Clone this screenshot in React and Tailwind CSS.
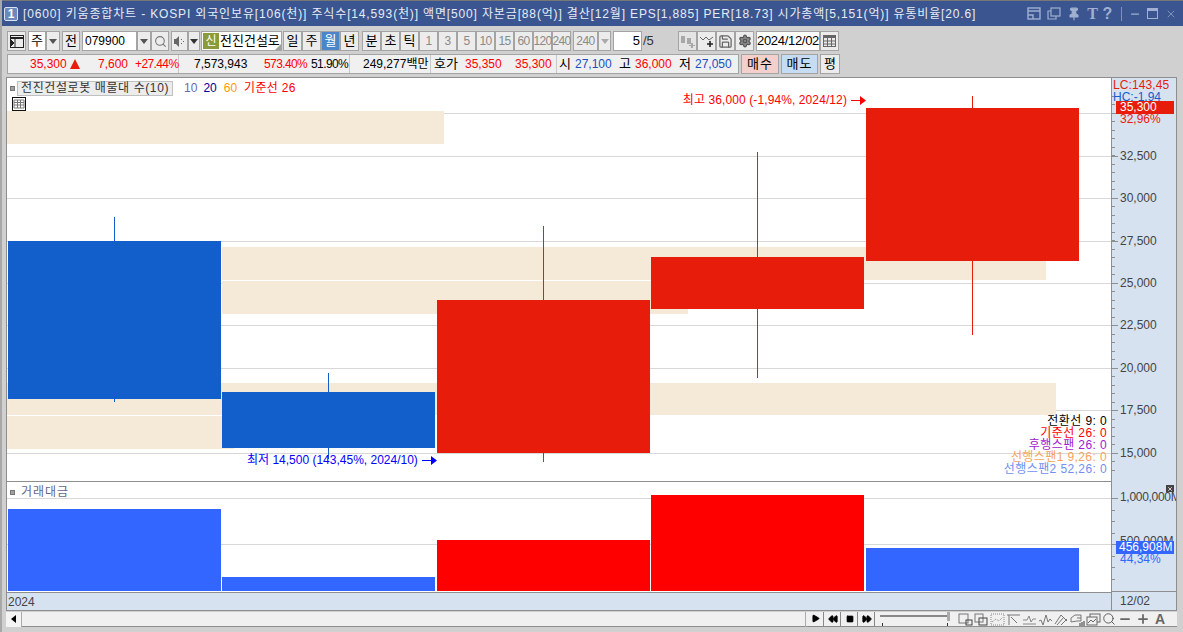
import { Play, Rewind, FastForward, Square, Search, Settings, Save, Pin, Minus, Plus, X } from 'lucide-react';

const font = { fontFamily: '"Liberation Sans", "Noto Sans CJK KR", sans-serif' };

// 버튼 공통
function Btn({ className = '', children }) {
  return (
    <div className={`h-5 shrink-0 flex items-center justify-center border border-[#a4a4a4] bg-[#ececec] text-black ${className}`}>
      {children}
    </div>
  );
}

function Caret({ className = 'border-t-[#555]' }) {
  return <span className={`w-0 h-0 border-x-[4px] border-x-transparent border-t-[5px] ${className}`} />;
}

const grid = [113, 156, 198, 241, 283, 325, 368, 410, 453];
const bands = [
  [7, 111, 437, 33], [222, 247, 824, 33], [222, 281, 466, 33],
  [7, 383, 1049, 32], [7, 416, 227, 33],
];
const candles = [
  { x: 8, w: 213, y: 241, h: 158, wx: 114, wy: 217, wh: 185, c: '#125ecb' },
  { x: 222, w: 213, y: 392, h: 56, wx: 328, wy: 373, wh: 86, c: '#125ecb' },
  { x: 437, w: 213, y: 300, h: 153, wx: 543, wy: 226, wh: 236, c: '#e81c0a' },
  { x: 651, w: 213, y: 257, h: 52, wx: 757, wy: 152, wh: 226, c: '#e81c0a' },
  { x: 866, w: 213, y: 108, h: 153, wx: 972, wy: 96, wh: 239, c: '#e81c0a' },
];
const volumes = [
  { x: 8, w: 213, y: 509, c: '#3366ff' },
  { x: 222, w: 213, y: 577, c: '#3366ff' },
  { x: 437, w: 213, y: 540, c: '#ff0000' },
  { x: 651, w: 213, y: 495, c: '#ff0000' },
  { x: 866, w: 213, y: 548, c: '#3366ff' },
];
const axisLabels = [
  ['32,500', 156], ['30,000', 198], ['27,500', 241], ['25,000', 283], ['22,500', 325],
  ['20,000', 368], ['17,500', 410], ['15,000', 453],
];
const legend = [
  ['전환선 9: 0', 'text-black'],
  ['기준선 26: 0', 'text-[#ff0000]'],
  ['후행스팬 26: 0', 'text-[#a020d0]'],
  ['선행스팬1 9,26: 0', 'text-[#f4a460]'],
  ['선행스팬2 52,26: 0', 'text-[#6f8ff0]'],
];

function TitleIcons() {
  return (
    <div className="ml-auto flex items-center text-[#9fb0d0] h-full">
      <svg width="14" height="13" viewBox="0 0 14 13" className="ml-0" fill="none" stroke="currentColor" strokeWidth="1.4"><rect x="1" y="1" width="12" height="11" /><path d="M1 4h12M1 8h5v4" /></svg>
      <svg width="14" height="13" viewBox="0 0 14 13" className="ml-[6px]" fill="none" stroke="currentColor" strokeWidth="1.2"><rect x="4" y="1" width="9" height="8" /><path d="M4 4H1v8h8V9" /></svg>
      <Pin size={14} className="ml-[6px] fill-current" />
      <span className="ml-[5px] w-[13px] text-center text-[16px] font-bold" style={{ fontFamily: '"Liberation Serif", serif' }}>T</span>
      <span className="ml-[3px] w-[11px] text-center text-[16px] font-bold">?</span>
      <span className="ml-[8px] w-px h-[14px] bg-[#7f92b8]" />
      <Minus size={12} strokeWidth={2.5} className="ml-[7px]" />
      <svg width="11" height="11" viewBox="0 0 11 11" className="ml-[6px]" fill="none" stroke="currentColor"><rect x="0.5" y="0.5" width="10" height="10" /><path d="M0 2h11" strokeWidth="2" /></svg>
      <X size={12} className="ml-[7px] mr-[6px] text-[#7f92b8]" />
    </div>
  );
}

function TopToolbar() {
  return (
    <div className="flex items-center h-5 text-[13px]">
      <Btn className="w-[19px]">
        <svg width="14" height="13" viewBox="0 0 14 13" fill="none" stroke="#222"><rect x="0.5" y="0.5" width="13" height="12" /><path d="M0 3h14" strokeWidth="2" /><path d="M5 3v10" /><path d="M1 5l3 3-3 3z" fill="#222" /></svg>
      </Btn>
      <Btn className="w-[18px] ml-[2px] !bg-white">주</Btn>
      <Btn className="w-[14px]"><Caret /></Btn>
      <Btn className="w-[18px] ml-[2px]">전</Btn>
      <Btn className="w-[55px] ml-[2px] !bg-white !justify-start pl-[2px] text-[12px]">079900</Btn>
      <Btn className="w-[14px]"><Caret /></Btn>
      <Btn className="w-[18px]"><Search size={13} className="text-[#777]" /></Btn>
      <Btn className="w-[17px] ml-[2px]">
        <svg width="12" height="11" viewBox="0 0 12 11" fill="#666"><path d="M0 3h2l3-3v11L2 8H0z" /><path d="M7 3h1v1H7zM7 7h1v1H7zM9 5h1v1H9z" /></svg>
      </Btn>
      <Btn className="w-[12px]"><Caret className="border-t-[#333]" /></Btn>
      <Btn className="w-[81px] ml-[1px] !bg-white !justify-start relative overflow-hidden">
        <span className="w-[16px] h-[16px] ml-px flex items-center justify-center bg-[#8c9a3a] text-white text-[12px]">신</span>
        <span className="ml-[1px] whitespace-nowrap">전진건설로</span>
        <span className="absolute right-0 bottom-0 w-0 h-0 border-l-[6px] border-l-transparent border-b-[6px] border-b-[#a0a0a0]" />
      </Btn>
      <Btn className="w-[19px] ml-[1px]">일</Btn>
      <Btn className="w-[19px]">주</Btn>
      <Btn className="w-[19px] !bg-[#4a86c8] !text-white">월</Btn>
      <Btn className="w-[19px]">년</Btn>
      <Btn className="w-[19px] ml-[3px]">분</Btn>
      <Btn className="w-[19px]">초</Btn>
      <Btn className="w-[19px]">틱</Btn>
      {['1', '3', '5', '10', '15', '60', '120', '240'].map((t) => (
        <Btn key={t} className="w-[19px] !text-[#8a8a8a] text-[12px] tracking-[-0.6px]">{t}</Btn>
      ))}
      <Btn className="w-[25px] ml-[2px] !text-[#8a8a8a] text-[12px] tracking-[-0.5px]">240</Btn>
      <Btn className="w-[13px]"><Caret className="border-t-[#aaa]" /></Btn>
      <Btn className="w-[29px] ml-[2px] !bg-white !justify-end pr-[1px]">5</Btn>
      <span className="w-[36px] pl-[1px] text-[#333]">/5</span>
      <Btn className="w-[19px] !bg-[#e4e4e4]">
        <svg width="15" height="13" viewBox="0 0 15 13" fill="#a8a8a8"><path d="M1 1h4v7H1zM7 3h4v6H7zM11 8h2v2h2v1h-2v2h-2v-2H9v-1h2z" /></svg>
      </Btn>
      <Btn className="w-[19px]">
        <svg width="15" height="13" viewBox="0 0 15 13" fill="none" stroke="#666"><path d="M1 2l3 3 3-3 3 3 4-3" /><path d="M11 6v6M8 9h6" stroke="#222" strokeWidth="1.6" /></svg>
      </Btn>
      <Btn className="w-[19px]"><Save size={15} className="text-[#666]" /></Btn>
      <Btn className="w-[19px]"><Settings size={14} className="text-[#555] fill-[#888]" /></Btn>
      <Btn className="w-[64px] ml-[2px] !bg-white tracking-[-0.3px]">2024/12/02</Btn>
      <Btn className="w-[19px]">
        <svg width="13" height="12" viewBox="0 0 13 12" fill="none" stroke="#666"><rect x="0.5" y="0.5" width="12" height="11" /><path d="M0 2h13" strokeWidth="2" /><path d="M1 6h11M1 9h11M4.500 3v8M8.500 3v8" /></svg>
      </Btn>
    </div>
  );
}

function QuoteRow() {
  return (
    <div className="flex items-center h-5 mt-[3px] text-[12px] whitespace-nowrap">
      <div className="w-[732px] h-5 shrink-0 flex border border-[#a4a4a4] bg-[#f0f0f0]">
        <div className="w-[171px] flex items-center text-[#ff0000] border-r border-[#c8c8c8] relative">
          <span className="absolute left-[22px]">35,300</span>
          <span className="absolute left-[62px] top-[4px] w-0 h-0 border-x-[5px] border-x-transparent border-b-[10px] border-b-[#e81c0a]" />
          <span className="absolute left-[90px]">7,600</span>
          <span className="absolute left-[127px] tracking-[-0.6px]">+27.44%</span>
        </div>
        <div className="w-[171px] flex items-center relative border-r border-[#c8c8c8]">
          <span className="absolute left-[15px] text-black">7,573,943</span>
          <span className="absolute left-[85px] text-[#ff0000] tracking-[-0.6px]">573.40%</span>
          <span className="absolute left-[132px] text-black tracking-[-0.6px]">51.90%</span>
        </div>
        <div className="w-[81px] flex items-center relative border-r border-[#c8c8c8]">
          <span className="absolute left-[13px] text-black">249,277백만</span>
        </div>
        <div className="w-[126px] flex items-center relative border-r border-[#c8c8c8]">
          <span className="absolute left-[3px] text-black text-[13px]">호가</span>
          <span className="absolute left-[34px] text-[#ff0000]">35,350</span>
          <span className="absolute left-[84px] text-[#ff0000]">35,300</span>
        </div>
        <div className="flex-1 flex items-center relative">
          <span className="absolute left-[2px] text-black text-[13px]">시</span>
          <span className="absolute left-[18px] text-[#1a4fc0]">27,100</span>
          <span className="absolute left-[62px] text-black text-[13px]">고</span>
          <span className="absolute left-[78px] text-[#ff0000]">36,000</span>
          <span className="absolute left-[122px] text-black text-[13px]">저</span>
          <span className="absolute left-[138px] text-[#1a4fc0]">27,050</span>
        </div>
      </div>
      <Btn className="w-[38px] ml-[2px] !bg-[#f4d0cc] text-[13px] tracking-[1px]">매수</Btn>
      <Btn className="w-[37px] ml-[2px] !bg-[#c6dcf2] text-[13px] tracking-[1px]">매도</Btn>
      <Btn className="w-[20px] ml-[2px] text-[13px]">평</Btn>
    </div>
  );
}

function Arrow({ color }) {
  return (
    <svg width="15" height="9" viewBox="0 0 15 9" className="ml-[4px]"><path d="M0 4h9V0l6 4.500L9 9V5H0z" fill={color} /></svg>
  );
}

function MainPane() {
  return (
    <div className="relative h-[403px] bg-white overflow-hidden">
      <svg width="1104" height="403" viewBox="7 78 1104 403" className="absolute inset-0">
        {grid.map((y) => <rect key={y} x="7" y={y} width="1104" height="1" fill="#d8d8d8" />)}
        {bands.map(([x, y, w, h]) => <rect key={y} x={x} y={y} width={w} height={h} fill="#f5e9d8" />)}
        {candles.map((c) => (
          <g key={c.x}>
            <rect x={c.wx} y={c.wy} width="1" height={c.wh} fill={c.c} />
            <rect x={c.x} y={c.y} width={c.w} height={c.h} fill={c.c} />
          </g>
        ))}
      </svg>

      <div className="absolute left-[3px] top-[1px] flex items-center text-[12px] whitespace-nowrap">
        <span className="w-[5px] h-[5px] bg-[#a0a0a0] border border-[#777]" />
        <span className="ml-[2px] h-[15px] px-[3px] flex items-center bg-[#ececec] border border-[#c0c0c0] text-[#333] tracking-[0.6px]">전진건설로봇 매물대 수(10)</span>
        <span className="ml-[11px] text-[#6a6aa8]">10</span>
        <span className="ml-[6px] text-[#000090]">20</span>
        <span className="ml-[7px] text-[#ff9a00]">60</span>
        <span className="ml-[7px] text-[#ff0000] tracking-[0.3px]">기준선 26</span>
      </div>
      <svg width="14" height="14" viewBox="0 0 14 14" fill="none" className="absolute left-[5px] top-[19px]"><rect x="0.5" y="0.5" width="13" height="13" stroke="#111" /><path d="M2 3h10v8H2zM2 5.5h10M2 8h10M5.5 3v8M8.500 3v8" stroke="#777" /></svg>

      <div className="absolute right-[245px] top-[13px] flex items-center text-[12px] text-[#ff0000] whitespace-nowrap tracking-[0.1px]">
        최고 36,000 (-1,94%, 2024/12)
        <Arrow color="#ff0000" />
      </div>
      <div className="absolute left-[240px] top-[373px] flex items-center text-[12px] text-[#0000ff] whitespace-nowrap">
        최저 14,500 (143,45%, 2024/10)
        <Arrow color="#0000ff" />
      </div>
      <div className="absolute right-[4px] top-[337px] text-right text-[12px] leading-[12px] tracking-[0.4px] whitespace-nowrap">
        {legend.map(([t, c]) => <div key={t} className={c}>{t}</div>)}
      </div>
    </div>
  );
}

function SubPane() {
  return (
    <div className="relative h-[110px] bg-white overflow-hidden">
      <svg width="1104" height="110" viewBox="7 482 1104 110" className="absolute inset-0">
        <rect x="7" y="498" width="1104" height="1" fill="#d8d8d8" />
        <rect x="7" y="544" width="1104" height="1" fill="#d8d8d8" />
        {volumes.map((v) => <rect key={v.x} x={v.x} y={v.y} width={v.w} height={591 - v.y} fill={v.c} />)}
      </svg>
      <div className="absolute left-[3px] top-[1px] flex items-center text-[12px] text-[#66668a] tracking-[1px]">
        <span className="w-[5px] h-[5px] bg-[#a0a0a0] border border-[#777]" />
        <span className="ml-[6px]">거래대금</span>
      </div>
    </div>
  );
}

function Axis() {
  return (
    <div className="relative w-[65px] h-full bg-[#d6e2f0] border-l border-[#8e8e8e] text-[12px] text-[#444] whitespace-nowrap overflow-hidden">
      <svg width="6" height="514" viewBox="0 78 6 514" className="absolute left-0 top-0">
        {Array.from({ length: 45 }, (_, i) => 96 + i * 8.49).map((y) => <rect key={y} x="0" y={Math.round(y)} width="3" height="1" fill="#8e8e8e" />)}
        {[113, 156, 198, 241, 283, 325, 368, 410, 453].map((y) => <rect key={y} x="0" y={y} width="6" height="1" fill="#8e8e8e" />)}
        {[498, 510, 521, 533, 544, 556, 567, 579].map((y) => <rect key={y} x="0" y={y} width={y === 498 || y === 544 ? 6 : 3} height="1" fill="#8e8e8e" />)}
      </svg>
      <span className="absolute left-[1px] top-[1px] text-[#e81c0a] leading-[13px] tracking-[0.1px]">LC:143,45</span>
      <span className="absolute left-[1px] top-[13px] text-[#125ecb] leading-[13px]">HC:-1,94</span>
      <span className="absolute left-[4px] top-[23px] w-[58px] h-[13px] pl-[4px] leading-[13px] bg-[#e81c0a] text-white">35,300</span>
      <span className="absolute left-[8px] top-[35px] text-[#e81c0a] leading-[13px]">32,96%</span>
      {axisLabels.map(([t, y]) => (
        <span key={t} className="absolute left-[8px] leading-[14px]" style={{ top: y - 85 }}>{t}</span>
      ))}
      <span className="absolute left-[8px] top-[412px] leading-[14px] tracking-[-0.3px]">1,000,000M</span>
      <span className="absolute left-[8px] top-[456px] leading-[14px]">500,000M</span>
      <span className="absolute left-[4px] top-[463px] w-[58px] h-[13px] pl-[3px] leading-[13px] bg-[#3366ff] text-white">456,908M</span>
      <span className="absolute left-[8px] top-[475px] leading-[13px] text-[#3366ff]">44,34%</span>
      <span className="absolute left-[54px] top-[407px] w-[8px] h-[7px] flex items-center justify-center bg-[#444]">
        <X size={6} strokeWidth={3} className="text-white" />
      </span>
    </div>
  );
}

function PlayBtn({ children }) {
  return <div className="w-[16px] h-[15px] shrink-0 flex items-center justify-center bg-[#f0f0f0] border-r border-b border-[#888]">{children}</div>;
}

function BottomBar() {
  const ic = 'w-[15px] h-[13px] shrink-0';
  return (
    <div className="flex items-center h-[15px] mt-[1px] ml-[6px] w-[1171px] bg-[#f0f0f0] border-b border-[#8e8e8e] text-[#777]">
      <div className="w-[16px] h-[15px] flex items-center justify-center border-r border-[#aaa] bg-[#f4f4f4]">
        <span className="w-0 h-0 border-y-[4px] border-y-transparent border-r-[5px] border-r-black" />
      </div>
      <div className="w-[784px] h-[15px] border-r border-[#aaa]" />
      <div className="flex ml-[2px] gap-[1px]">
        <PlayBtn><Play size={9} className="fill-black text-black" /></PlayBtn>
        <PlayBtn><Rewind size={10} className="fill-black text-black" /></PlayBtn>
        <PlayBtn><Square size={8} className="fill-black text-black" /></PlayBtn>
        <PlayBtn><FastForward size={10} className="fill-black text-black" /></PlayBtn>
      </div>
      <div className="relative w-[70px] h-[14px] ml-[5px] shrink-0">
        <span className="absolute left-0 right-0 top-[3px] h-[2px] bg-[#888]" />
        <span className="absolute right-0 top-0 w-[3px] h-[9px] bg-[#aaa]" />
        <span className="absolute left-[2px] bottom-0 w-px h-[3px] bg-[#333]" />
        <span className="absolute right-[2px] bottom-0 w-px h-[3px] bg-[#333]" />
      </div>
      <div className="flex items-center ml-[8px] gap-[1px]">
        <svg className={ic} viewBox="0 0 15 13" fill="none" stroke="#777"><rect x="1" y="1" width="9" height="9" /><rect x="8" y="7" width="6" height="5" stroke="#444" /></svg>
        <svg className={ic} viewBox="0 0 15 13" fill="none" stroke="#777"><rect x="1" y="1" width="8" height="8" /><rect x="5" y="5" width="8" height="7" stroke="#444" /></svg>
        <svg className={ic} viewBox="0 0 15 13" fill="none" stroke="#888" strokeDasharray="1 1"><rect x="1" y="1" width="13" height="11" /><path d="M2 9l4-3 3 2 4-4" /></svg>
        <svg className={ic} viewBox="0 0 15 13" fill="none" stroke="#777"><path d="M1 2h13M3 2v10M5 4l6 6" /></svg>
        <svg className={ic} viewBox="0 0 15 13" fill="none" stroke="#888"><path d="M1 11h13M1 7h4l2-4 2 6 2-3h3" /></svg>
        <svg className={ic} viewBox="0 0 15 13" fill="none" stroke="#777"><path d="M1 8l2-1 2 5 3-10 2 7 2-3 2 2" /></svg>
        <svg className={ic} viewBox="0 0 15 13" fill="none" stroke="#777"><path d="M1 11l6-9 6 6M3 12l7-8M7 12l6-6" /></svg>
        <svg className={ic} viewBox="0 0 15 13" fill="none" stroke="#777"><path d="M1 5l4-3h6v6H7L1 9zM7 5h4" /><path d="M10 10v3M12 9v4M14 8v5" stroke="#333" /></svg>
        <svg className={ic} viewBox="0 0 15 13" fill="none" stroke="#666"><rect x="4" y="1" width="10" height="8" /><rect x="1" y="4" width="10" height="8" fill="#f0f0f0" /><path d="M2 10l3-3 2 2 3-3" /></svg>
        <Search size={14} strokeWidth={1.6} className="shrink-0 text-[#555]" />
        <Minus size={14} strokeWidth={3} className="shrink-0 ml-[1px] text-[#666]" />
        <Plus size={14} strokeWidth={3} className="shrink-0 ml-[3px] text-[#666]" />
        <span className="ml-[4px] text-[14px] font-bold text-[#666]">A</span>
      </div>
    </div>
  );
}

export default function App() {
  return (
    <div className="w-[1183px] h-[632px] flex flex-col bg-[#d0d0d0] overflow-hidden border-l-2 border-[#a8a8a8]" style={font}>
      <div className="-ml-[2px] w-[1183px] h-[26px] shrink-0 flex items-center bg-[#3b5590] border-t border-[#777] text-[12px] text-[#e6ecf6] whitespace-nowrap">
        <span className="ml-[4px] w-[14px] h-[14px] flex items-center justify-center rounded-[2px] border border-[#d8e2f2] bg-[#6d88bc] text-white font-bold text-[12px]">1</span>
        <span className="ml-[5px] tracking-[0.85px]">[0600] 키움종합차트 - KOSPI 외국인보유[106(천)] 주식수[14,593(천)] 액면[500] 자본금[88(억)] 결산[12월] EPS[1,885] PER[18.73] 시가총액[5,151(억)] 유통비율[20.6]</span>
        <TitleIcons />
      </div>

      <div className="h-[51px] shrink-0 pl-[5px] pt-[5px]">
        <TopToolbar />
        <QuoteRow />
      </div>

      <div className="ml-[4px] w-[1171px] h-[534px] shrink-0 flex border border-[#8e8e8e] bg-white">
        <div className="flex-1 flex flex-col min-w-0">
          <MainPane />
          <div className="h-px bg-[#8e8e8e]" />
          <SubPane />
          <div className="h-[18px] flex items-center pl-[1px] bg-[#d6e2f0] border-t border-[#8e8e8e] text-[12px] text-[#444]">2024</div>
        </div>
        <div className="w-[65px] flex flex-col">
          <div className="h-[514px]"><Axis /></div>
          <div className="flex-1 flex items-center pl-[8px] bg-[#d6e2f0] border-l border-t border-[#8e8e8e] text-[12px] text-[#444]">12/02</div>
        </div>
      </div>

      <div className="-ml-[2px]"><BottomBar /></div>
    </div>
  );
}
